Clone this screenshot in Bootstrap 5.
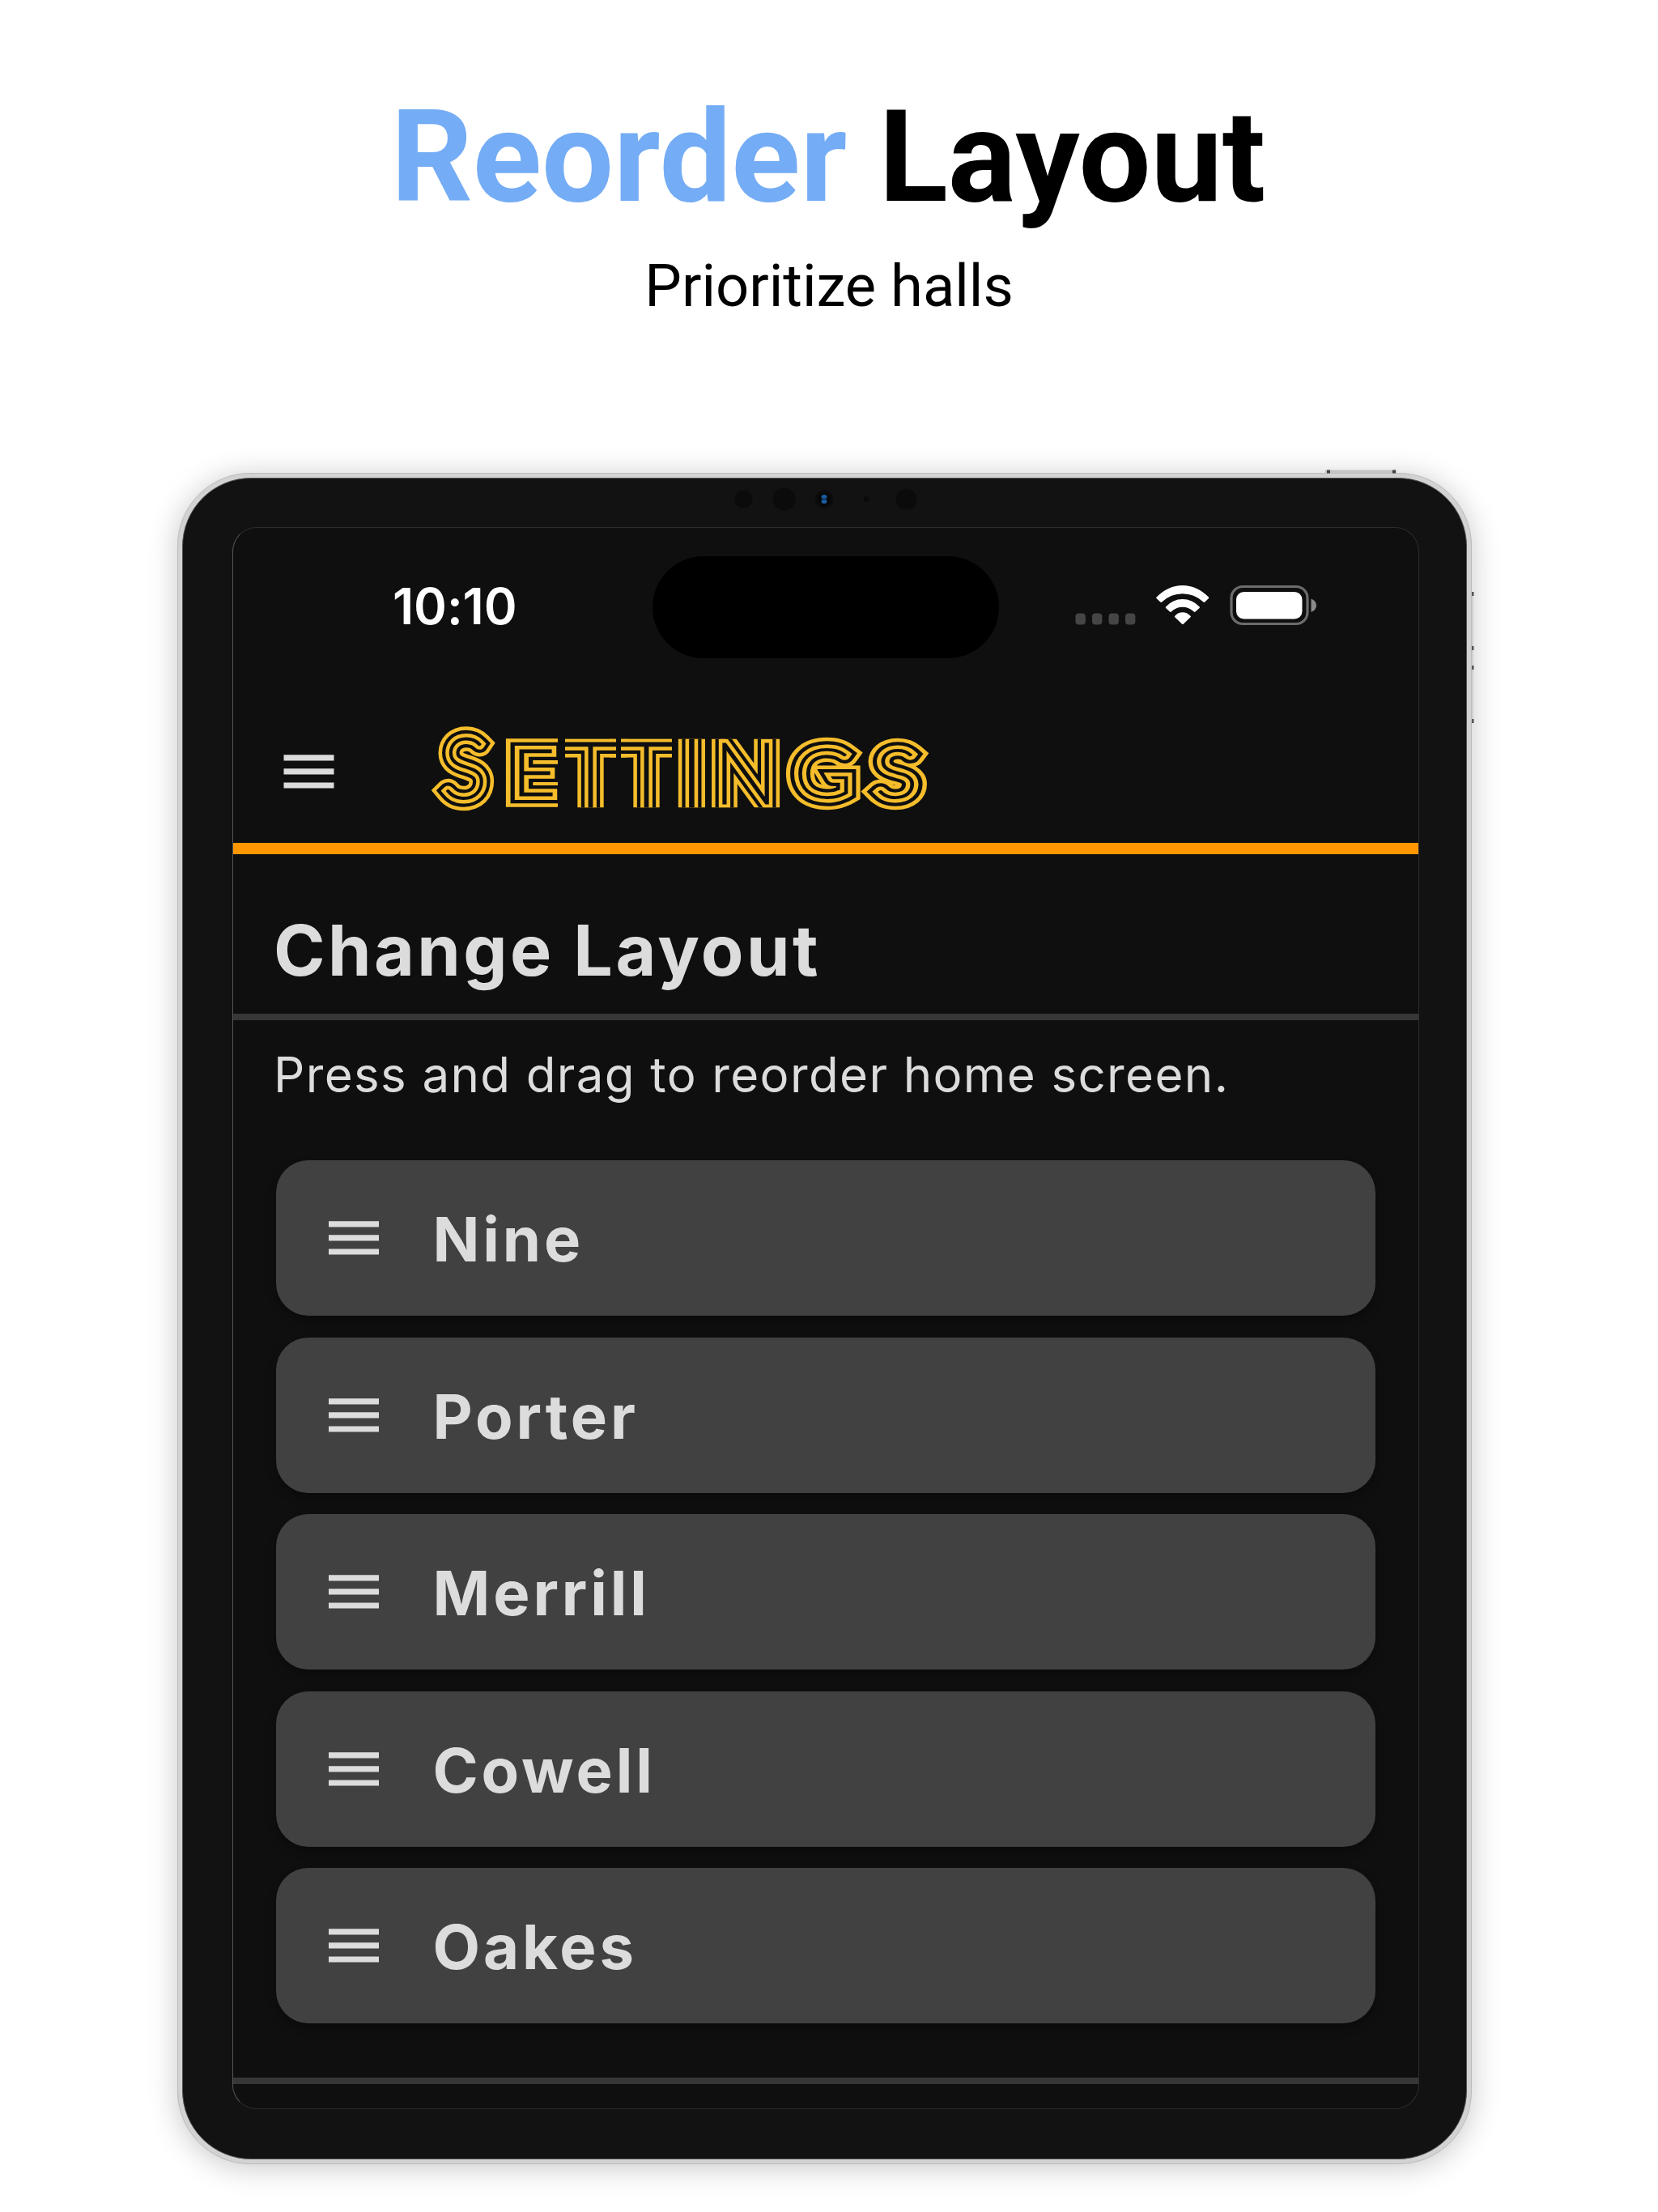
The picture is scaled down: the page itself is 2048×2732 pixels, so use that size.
<!DOCTYPE html>
<html lang="en">
<head>
<meta charset="utf-8">
<title>Reorder Layout</title>
<link href="https://cdn.jsdelivr.net/npm/bootstrap@5.3.0/dist/css/bootstrap.min.css" rel="stylesheet">
<style>
body{background:#fff;width:2048px;height:2732px;overflow:hidden;color:#000}
.promo{height:584px;padding-top:111px;font-family:Roboto,sans-serif}
.promo h1{font-size:157.8px;line-height:168px;font-weight:700;margin:0 2px 0 0}
.promo h1 span{color:#74acf5}
.promo p{font-size:72.3px;line-height:100px;margin:25px 0 0}
.tablet{width:1599px;height:2089px;margin-left:219px;border-radius:90px;background:#d2d2d2;border:1px solid #bcbcbc;padding:5px;box-shadow:0 4px 36px rgba(0,0,0,.22)}
.bezel{height:100%;border-radius:85px;background:#121212;border:1px solid #555;padding:60px 59px 59px 61px}
.screen{width:1466px;height:1954px;border:1px solid #2c2c2c;border-left-color:#555;border-radius:30px;background:#0f0f0f;overflow:hidden;color:#dcdcdc;font-family:Inter,"Liberation Sans",sans-serif}
.status{height:196px}
.clock{width:321px;margin-left:197px;padding-bottom:3px;font-size:62px;font-weight:600;color:#fff;line-height:1;letter-spacing:-.1px}
.island{width:428px;height:126px;border-radius:63px;background:#000}
.status svg{margin-left:94px;margin-bottom:7px}
.appbar{height:193px;padding:16px 0 0 62px}
.appbar .wordmark{margin-left:114px}
.accent{height:14px;background:#ff9800}
.rule{height:7.5px;margin-bottom:.5px;background:#373737}
.screen h2{font-size:86px;line-height:118px;font-weight:700;margin:0;padding:60px 0 19px 50px;height:197px;letter-spacing:3.4px}
.hint{font-size:60px;line-height:134px;height:173px;margin:0;padding-left:50px;letter-spacing:1.38px;white-space:nowrap}
.halls{gap:26.6px;padding:0 53px 67px 52.500px}
.hall{height:192px;border-radius:40px;background:#414141;padding:2px 0 0 65px;box-shadow:0 6px 12px rgba(0,0,0,.3);font-size:76px;font-weight:700;letter-spacing:3.9px;line-height:1}
.hall svg{margin-right:67px;margin-top:-2px}
.over{left:0;top:0;pointer-events:none}
.wordmark text{font-family:Inter,sans-serif;font-weight:100;text-anchor:middle}
.wordmark .round{font-family:Lato,sans-serif}
.s1{stroke:#f5bd2b;stroke-width:29.5px}
.s2{stroke:#0f0f0f;stroke-width:20.5px}
.s3{stroke:#f5bd2b;stroke-width:12px}
.s4{stroke:#0f0f0f;stroke-width:3px;fill:#0f0f0f}
</style>
<script src="https://cdn.jsdelivr.net/npm/bootstrap@5.3.0/dist/js/bootstrap.bundle.min.js"></script>
</head>
<body class="position-relative">
<svg width="0" height="0" class="position-absolute"><defs>
<g id="bars" fill="#dcdcdc"><path d="M0 .2h62v7.200H0zM0 17.300h62v7.200H0zM0 34.400h62v7.200H0z"/></g>
</defs></svg>
<header class="promo text-center">
<h1><span>Reorder</span> Layout</h1>
<p>Prioritize halls</p>
</header>
<main class="tablet"><div class="bezel"><div class="screen d-flex flex-column">
<div class="status d-flex align-items-center flex-shrink-0">
<div class="clock">10:10</div>
<div class="island"></div>
<svg width="300" height="52" viewBox="1328 720.5 300 52">
<g fill="#454545"><rect x="1328.5" y="757" width="12.4" height="14" rx="4"/><rect x="1349" y="757" width="12.4" height="14" rx="4"/><rect x="1369.5" y="757" width="12.4" height="14" rx="4"/><rect x="1390" y="757" width="12.4" height="14" rx="4"/></g>
<g fill="#fff"><path d="M1428.3 737.2Q1443 722.5 1460.7 722.5T1493.2 737.2Q1493.5 738 1493 738.6L1488.3 743Q1487.3 743.8 1486.4 743Q1475 732.8 1460.7 732.8T1435.2 743Q1434.2 743.8 1433.2 743L1428.5 738.6Q1427.8 738 1428.3 737.2Z"/><path d="M1440 749Q1448.5 739.5 1460.7 739.5T1481.7 749Q1482.3 749.8 1481.6 750.5L1476.5 755Q1475.6 755.8 1474.7 755Q1468.6 749.2 1460.7 749.2T1446.8 755Q1445.9 755.8 1445 755L1440.1 750.5Q1439.2 749.8 1440 749Z"/><path d="M1451.2 760.2Q1455.3 755.8 1460.7 755.8T1470.5 760.2Q1471.3 761 1470.5 761.8L1462 770Q1460.9 771 1459.8 770L1451.2 761.8Q1450.4 761 1451.2 760.2Z"/><rect x="1527" y="730.5" width="81.5" height="33.5" rx="9.5"/></g>
<rect x="1521" y="724" width="94" height="46" rx="14" fill="none" stroke="#6c6c6c" stroke-width="3.2"/>
<path d="M1619.5 739q6.5 2.5 6.5 8.300t-6.500 8.300z" fill="#8a8a8a"/>
</svg>
</div>
<div class="appbar d-flex align-items-center flex-shrink-0">
<svg width="64" height="42"><use href="#bars" x=".5"/></svg>
<svg class="wordmark" width="630" height="124" viewBox="527 890.500 630 124" role="img" aria-label="Settings">
<defs>
<text id="w0" class="round" x="573.500" y="985.500" font-size="104">S</text>
<text id="w1" transform="translate(659 981.500) scale(1.250 1)" font-size="75">E</text>
<text id="w2" x="728.500 797.500" y="1008.500" font-size="125">TT</text>
<text id="w3"><tspan x="853.500" y="1012" font-size="160">I</tspan><tspan x="920" y="991" font-size="100">N</tspan></text>
<text id="w4" class="round" transform="translate(1016 984.500) scale(1.150 1)" font-size="84">G</text>
<text id="w5" class="round" transform="translate(1106.500 984.500) scale(1.200 1)" font-size="82">S</text>
<clipPath id="c1"><path d="M610 905h78v100h-78z"/></clipPath>
<clipPath id="c2"><path d="M697 912h63v85h-63zM766 912h63v85h-63z"/></clipPath>
<clipPath id="c3"><path d="M836 912h36v85h-36zM874 912h91v85h-91z"/></clipPath>
</defs>
<g fill="none" stroke-linejoin="miter">
<g><use href="#w0" class="s1"/><use href="#w0" class="s2"/><use href="#w0" class="s3"/><use href="#w0" class="s4"/></g>
<g clip-path="url(#c1)"><use href="#w1" class="s1"/><use href="#w1" class="s2"/><use href="#w1" class="s3"/><use href="#w1" class="s4"/></g>
<g clip-path="url(#c2)"><use href="#w2" class="s1"/><use href="#w2" class="s2"/><use href="#w2" class="s3"/><use href="#w2" class="s4"/></g>
<g clip-path="url(#c3)"><use href="#w3" class="s1"/><use href="#w3" class="s2"/><use href="#w3" class="s3"/><use href="#w3" class="s4"/></g>
<g><use href="#w4" class="s1"/><use href="#w4" class="s2"/><use href="#w4" class="s3"/><use href="#w4" class="s4"/></g>
<g><use href="#w5" class="s1"/><use href="#w5" class="s2"/><use href="#w5" class="s3"/><use href="#w5" class="s4"/></g>
</g>
</svg>
</div>
<div class="accent flex-shrink-0"></div>
<h2 class="flex-shrink-0">Change Layout</h2>
<div class="rule flex-shrink-0"></div>
<p class="hint flex-shrink-0">Press and drag to reorder home screen.</p>
<div class="halls d-flex flex-column flex-shrink-0">
<div class="hall d-flex align-items-center"><svg width="62" height="42"><use href="#bars"/></svg>Nine</div>
<div class="hall d-flex align-items-center"><svg width="62" height="42"><use href="#bars"/></svg>Porter</div>
<div class="hall d-flex align-items-center"><svg width="62" height="42"><use href="#bars"/></svg>Merrill</div>
<div class="hall d-flex align-items-center"><svg width="62" height="42"><use href="#bars"/></svg>Cowell</div>
<div class="hall d-flex align-items-center"><svg width="62" height="42"><use href="#bars"/></svg>Oakes</div>
</div>
<div class="rule flex-shrink-0"></div>
</div></div></main>
<svg class="over position-absolute" width="2048" height="2732">
<g fill="#0b0b0b"><circle cx="918.500" cy="616.500" r="11"/><circle cx="968.700" cy="616.500" r="14"/><circle cx="1018" cy="616.500" r="11"/><circle cx="1070" cy="616.500" r="3.500"/><circle cx="1119.700" cy="616.500" r="13"/></g>
<circle cx="1018" cy="616.500" r="7" fill="#050505"/><ellipse cx="1018" cy="613.500" rx="3.500" ry="2.500" fill="#1c5ca0"/><ellipse cx="1018" cy="619.500" rx="3.500" ry="2.500" fill="#1c5ca0"/><path d="M1014.500 616.500h7" stroke="#0c3566" stroke-width="2"/>
<path d="M1637 580.500h88v4h-88z" fill="#c4c4c4"/><path d="M1639 580.500h4v4h-4zM1720 580.500h4v4h-4z" fill="#444"/>
<path d="M1818 732h2v96h-2zM1818 822h2v70h-2z" fill="#d0d0d0"/><path d="M1818 731h2.500v5h-2.500zM1818 798h2.500v5h-2.500zM1818 822h2.500v5h-2.500zM1818 888h2.500v5h-2.500z" fill="#555"/>
</svg>
</body>
</html>
